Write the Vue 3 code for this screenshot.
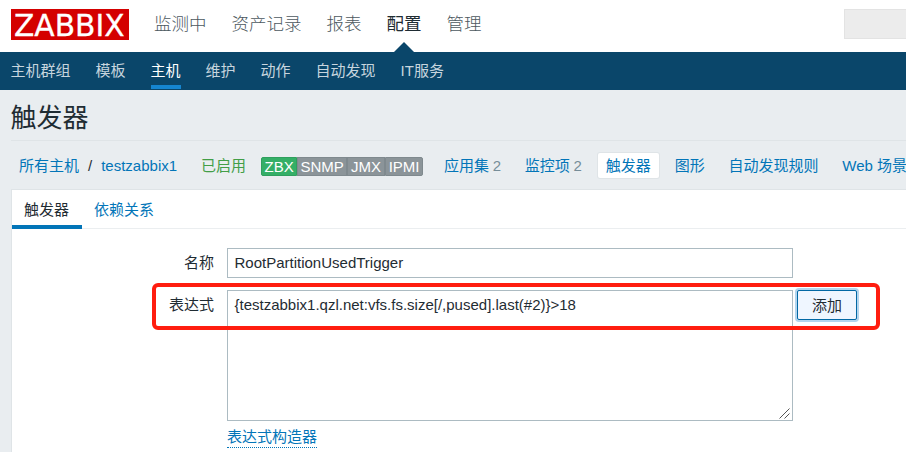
<script setup>
const mainMenu = ['监测中', '资产记录', '报表', '配置', '管理']
const subMenu = ['主机群组', '模板', '主机', '维护', '动作', '自动发现', 'IT服务']
const interfaces = ['ZBX', 'SNMP', 'JMX', 'IPMI']
const sections = [
  { label: '应用集', count: 2 },
  { label: '监控项', count: 2 },
  { label: '触发器', active: true },
  { label: '图形' },
  { label: '自动发现规则' },
  { label: 'Web 场景' }
]
</script>

<template>
  <div class="page">
    <header class="top">
      <svg class="logo" width="118" height="31" viewBox="0 0 118 31">
        <rect width="118" height="31" fill="#d40000" />
        <text x="3" y="26.5" textLength="110.5" lengthAdjust="spacingAndGlyphs">ZABBIX</text>
      </svg>
      <nav class="main-menu">
        <a v-for="m in mainMenu" :key="m" :class="{ on: m === '配置' }">{{ m }}</a>
      </nav>
      <div class="search"></div>
    </header>
    <nav class="sub-menu">
      <a v-for="m in subMenu" :key="m" :class="{ on: m === '主机' }">{{ m }}</a>
    </nav>
    <h1>触发器</h1>
    <div class="crumbs">
      <a>所有主机</a><span class="slash">/</span><a class="host">testzabbix1</a>
      <span class="enabled">已启用</span>
      <div class="badges">
        <span v-for="i in interfaces" :key="i" :class="['badge', i.toLowerCase()]">{{ i }}</span>
      </div>
      <div class="sections">
        <span v-for="s in sections" :key="s.label" :class="['section', { on: s.active }]">
          <a>{{ s.label }}</a><sup v-if="s.count">{{ s.count }}</sup>
        </span>
      </div>
    </div>
    <main class="card">
      <div class="tabs">
        <a class="tab on">触发器</a>
        <a class="tab">依赖关系</a>
      </div>
      <div class="form">
        <label class="name">名称</label>
        <div class="field name">RootPartitionUsedTrigger</div>
        <label class="expr">表达式</label>
        <div class="field expr">
          {testzabbix1.qzl.net:vfs.fs.size[/,pused].last(#2)}&gt;18
          <svg class="grip" width="11" height="11" viewBox="0 0 11 11">
            <path d="M0.5 10.5L10.5 0.5M5.5 10.5L10.5 5.5" stroke="#555" fill="none" />
          </svg>
        </div>
        <button type="button">添加</button>
        <a class="builder">表达式构造器</a>
      </div>
    </main>
    <div class="highlight"></div>
  </div>
</template>

<style>
body { margin: 0; overflow: hidden; }
</style>

<style scoped>
* { box-sizing: border-box; }
.page {
  position: relative;
  width: 906px;
  height: 452px;
  overflow: hidden;
  display: flex;
  flex-direction: column;
  background: #e9edf0;
  color: #1f2c33;
  font: 15px/20px "Liberation Sans", "Noto Sans CJK SC", sans-serif;
  white-space: nowrap;
}
a { color: #0275b8; }
.top { display: flex; flex: 0 0 52px; background: #fff; padding: 9px 0 0 11px; }
.logo { flex: none; }
.logo text { font: 30px "DejaVu Sans", sans-serif; fill: #fff; stroke: #fff; stroke-width: 0.3px; }
.main-menu { display: flex; gap: 25px; margin-left: 25px; font-size: 17.5px; line-height: 30px; }
.main-menu a { height: 43px; color: #4c5860; position: relative; font-weight: 300; }
.main-menu a.on { color: #1f2c33; font-weight: 400; }
.main-menu a.on::after {
  content: "";
  position: absolute;
  left: 50%;
  bottom: 0;
  margin-left: -10px;
  border: 10px solid transparent;
  border-top: 0;
  border-bottom-color: #0a466a;
}
.search { width: 80px; height: 30px; margin-left: auto; margin-right: -18px; background: #ececec; border: 1px solid #e3e3e3; }
.sub-menu { display: flex; gap: 25px; flex: 0 0 38px; padding: 0 10.5px; background: #0a466a; line-height: 37px; }
.sub-menu a { color: #c7d5de; height: 37px; }
.sub-menu a.on { color: #fff; border-bottom: 4px solid #1585d0; }
h1 { flex: 0 0 50px; min-height: 0; height: 50px; margin: 0 0 0 10.5px; font-size: 26px; line-height: 56px; font-weight: 400; }
.crumbs { display: flex; align-items: center; flex: 0 0 49px; margin-left: 11px; padding: 1px 0 0 8px; border-top: 1px solid #dfe4e7; }
.slash { margin: 0 9px; }
.enabled { color: #429e47; margin: 0 15px 0 24px; }
.badges { display: flex; width: 162px; flex: none; padding-top: 1px; }
.badge {
  width: 38px;
  height: 19px;
  border: 1px solid #7f898e;
  background: #8b9499;
  color: #fff;
  text-align: center;
  line-height: 17px;
}
.badge.zbx { width: 36px; background: #34af67; border-color: #2f9f5e; border-radius: 2px 0 0 2px; }
.badge.snmp { width: 50px; }
.badge.ipmi { border-radius: 0 2px 2px 0; }
.sections { display: flex; align-items: center; margin-left: 9px; }
.section { display: flex; padding: 0 11.9px; line-height: 25px; }
.section.on { background: #fff; border-radius: 2px; padding: 0 8px; margin: 0 4px; box-shadow: 0 0 0 1px #dfe4e7; }
sup { color: #768d99; margin-left: 3.7px; font-size: 15px; line-height: 25px; vertical-align: baseline; }
.card { flex: 1; margin-left: 11px; border: 1px solid #dfe4e7; border-width: 1px 0 0 1px; background: #fff; }
.tabs { display: flex; height: 39px; border-bottom: 1px solid #ebeef0; }
.tab { height: 39px; padding: 0 12px; line-height: 40px; }
.tab.on { color: #1f2c33; width: 70px; border-bottom: 4px solid #0275b8; }
.form {
  display: grid;
  grid-template-columns: 202px 566px auto;
  grid-template-rows: 30px 131px auto;
  column-gap: 13px;
  row-gap: 12px;
  justify-content: start;
  margin-top: 19px;
}
label { grid-column: 1; text-align: right; line-height: 30px; }
.field { grid-column: 2; position: relative; border: 1px solid #acbbc2; padding: 0 6.5px; line-height: 27px; }
.name { grid-row: 1; }
.expr { grid-row: 2; }
.grip { position: absolute; right: 2px; bottom: 1px; }
button {
  grid-column: 3;
  grid-row: 2;
  width: 60px;
  height: 30px;
  margin-left: -9px;
  padding: 2px 0 0;
  border: 1px solid #0268a4;
  border-radius: 2px;
  background: #eff6ff;
  color: #1f2c33;
  font: inherit;
  box-shadow: 0 0 0 2px #b3d5ee;
}
.builder { grid-column: 2; grid-row: 3; justify-self: start; margin-top: -6px; line-height: 20px; border-bottom: 1px dotted #0275b8; }
.highlight { position: absolute; left: 152px; top: 283px; width: 728px; height: 47px; border: 4px solid #ff1d0f; border-radius: 6px; }
</style>
